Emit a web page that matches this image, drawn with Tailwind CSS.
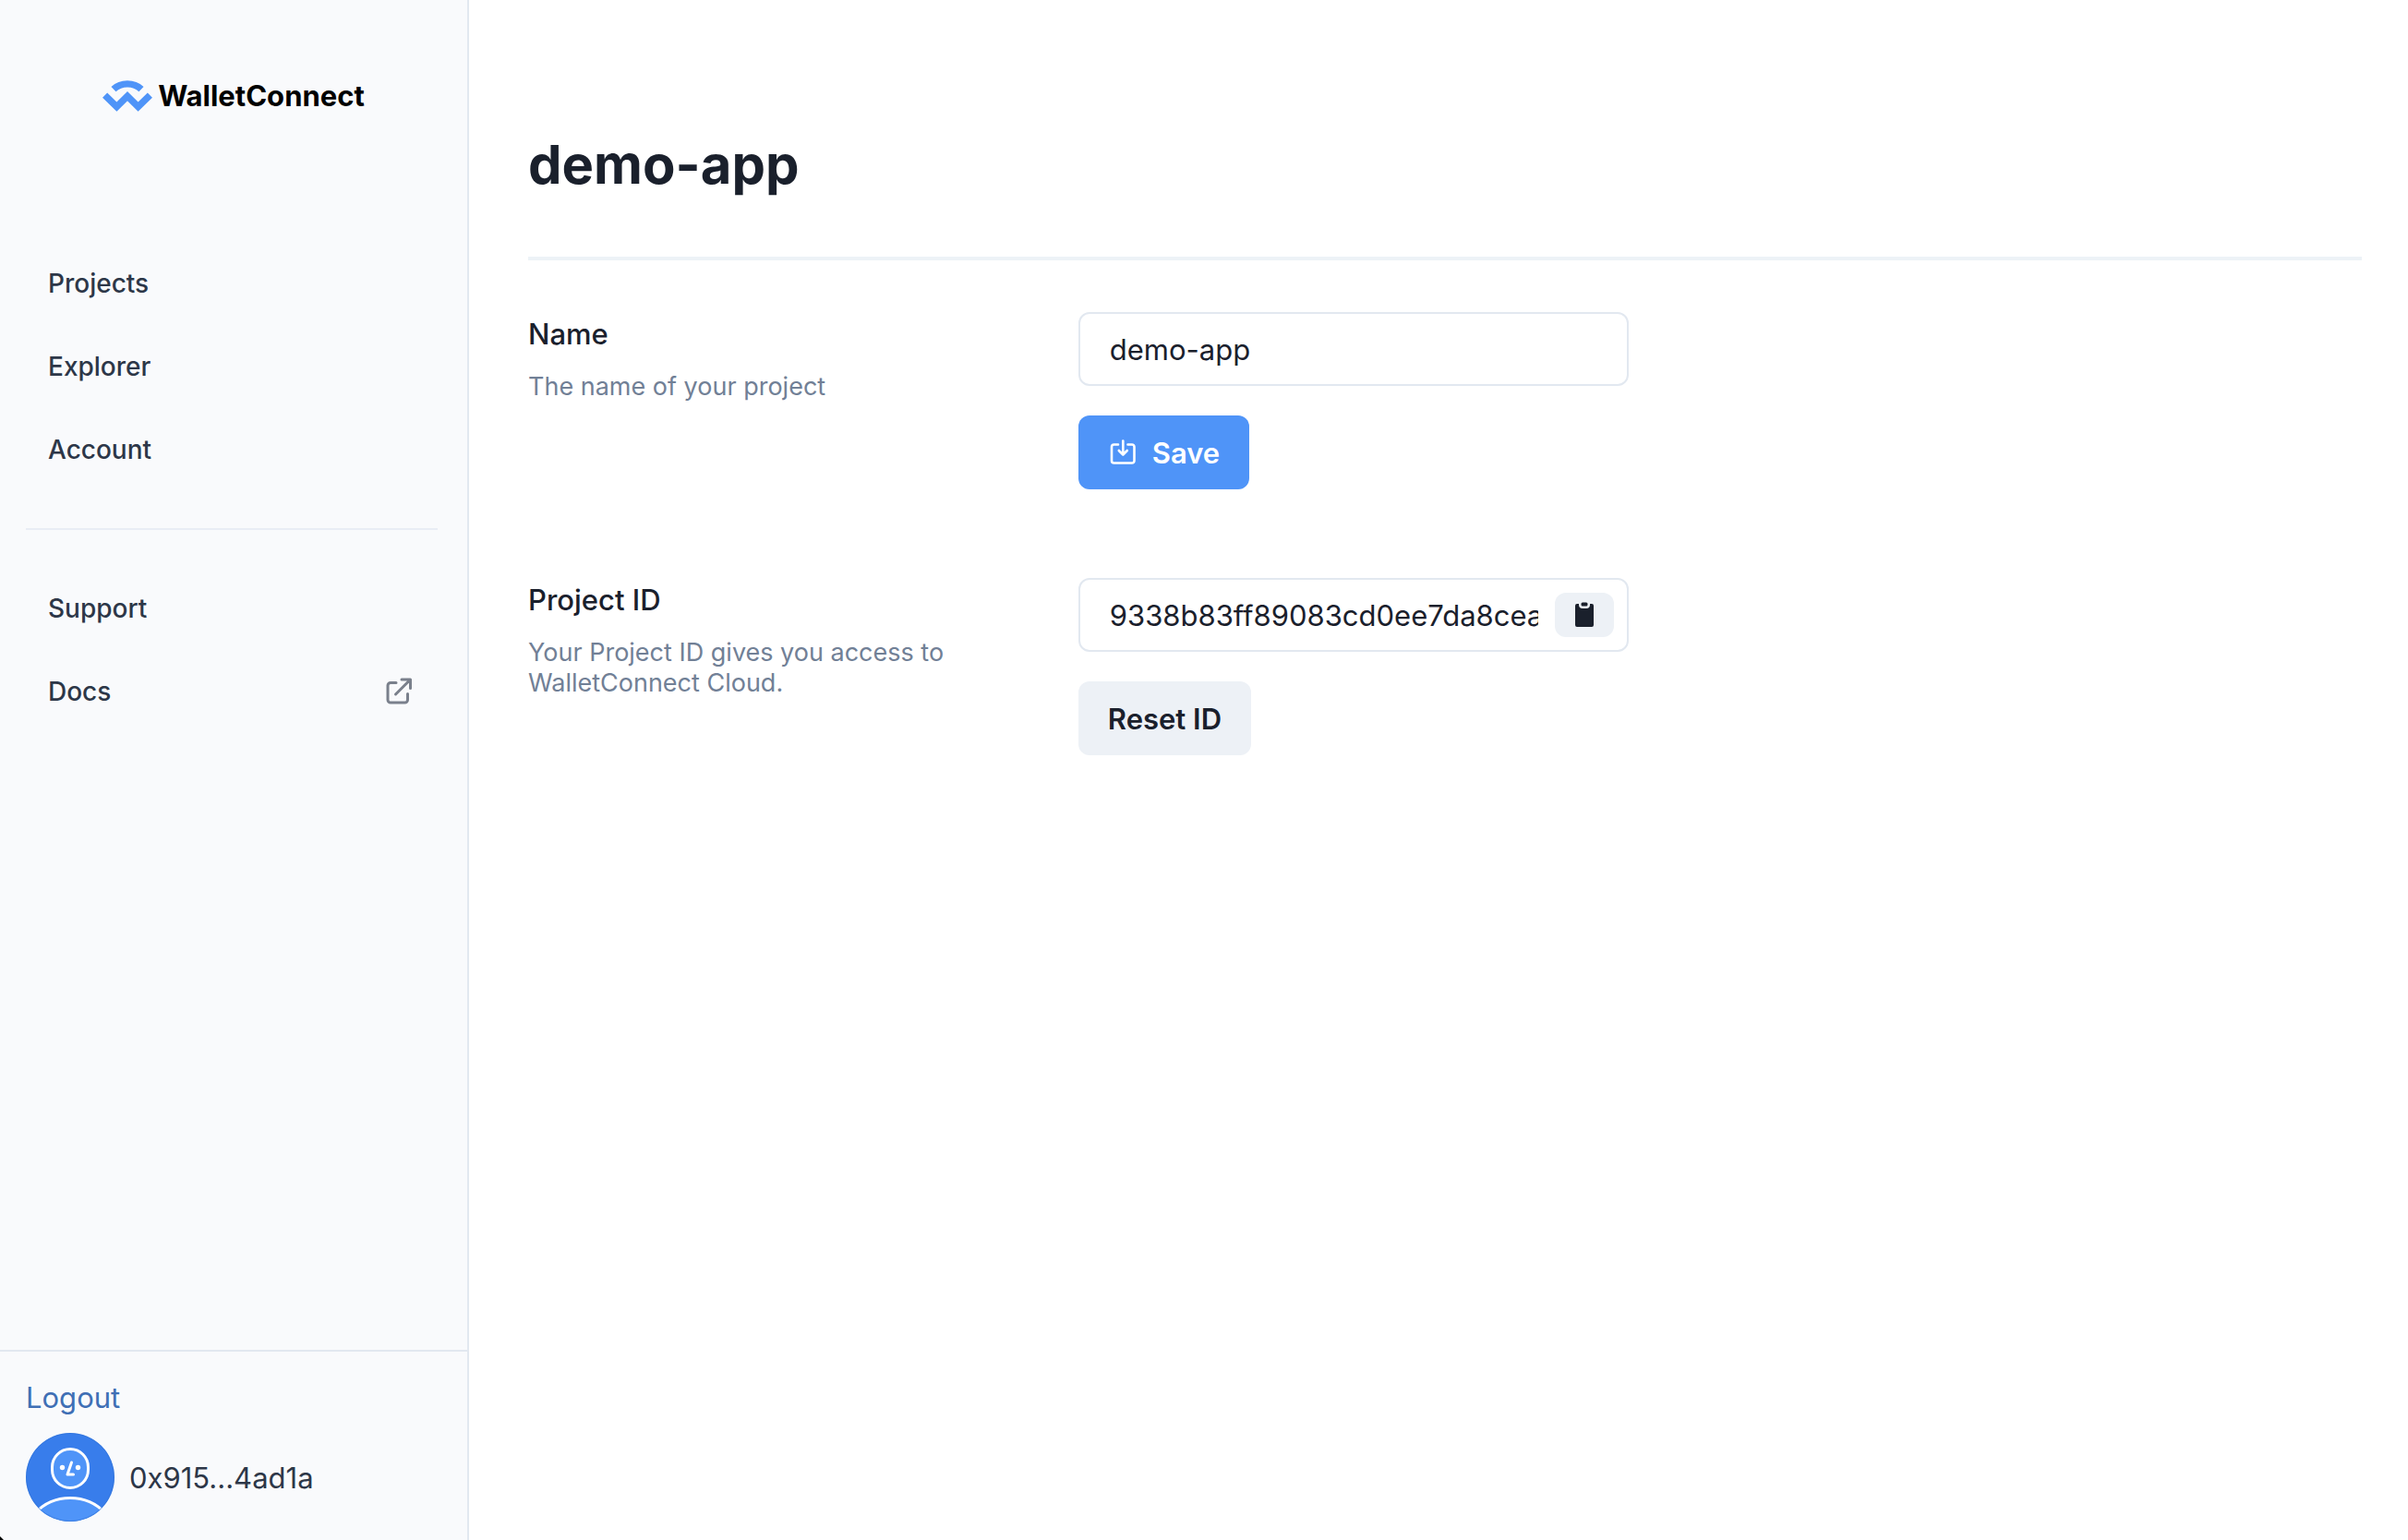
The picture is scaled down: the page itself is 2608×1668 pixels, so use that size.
<!DOCTYPE html>
<html lang="en">
<head>
<meta charset="utf-8">
<title>demo-app – WalletConnect Cloud</title>
<script src="https://cdn.jsdelivr.net/npm/@tailwindcss/browser@4"></script>
</head>
<body class="relative flex min-h-screen bg-white font-[Inter,sans-serif] text-[31px] leading-[48px] text-[#1a202c]">
  <aside class="flex w-[508px] shrink-0 flex-col border-r-2 border-[#e2e8f0] bg-[#f9fafc] text-[#2d3748]">
    <a href="#" class="flex items-center justify-center gap-[6px] pt-20 text-black">
      <svg class="h-[34px] w-[54px]" viewBox="0 0 54 34" fill="none" stroke="#4f94f8" stroke-width="7.4" stroke-linejoin="miter" aria-hidden="true">
        <path d="M12 9.6C20 2 34 2 42 9.6"/>
        <path d="M2.6 16.2 15.4 28.6 27 17.2 38.6 28.6 51.4 16.2"/>
      </svg>
      <span class="font-bold">WalletConnect</span>
    </a>
    <nav class="mt-[134px] flex flex-col px-7 text-[28px] font-medium">
      <a href="#" class="flex h-[90px] items-center px-6">Projects</a>
      <a href="#" class="flex h-[90px] items-center px-6">Explorer</a>
      <a href="#" class="flex h-[90px] items-center px-6">Account</a>
      <hr class="mt-10 mb-10 mr-1 border-t-2 border-[#e9edf5]">
      <a href="#" class="flex h-[90px] items-center px-6">Support</a>
      <a href="#" class="flex h-[90px] items-center justify-between px-6">Docs
        <svg class="mr-[6px] size-8" viewBox="0 0 32 32" fill="none" stroke="#7a808c" stroke-width="3" stroke-linecap="round" stroke-linejoin="round" aria-hidden="true">
          <path d="M13 6.500H7a3 3 0 0 0-3 3V25a3 3 0 0 0 3 3h15.500a3 3 0 0 0 3-3v-6.500M12.500 19 28 3.500M19 3h9.500v9.500"/>
        </svg>
      </a>
    </nav>
    <div class="mt-auto flex flex-col gap-[14px] border-t-2 border-[#e2e8f0] px-7 pt-[26px] pb-5">
      <a href="#" class="self-start text-[#3f6fb5]">Logout</a>
      <div class="flex items-center gap-4">
        <svg class="size-24" viewBox="0 0 96 96" aria-hidden="true">
          <defs><clipPath id="disc"><circle cx="48" cy="48" r="48"/></clipPath></defs>
          <g clip-path="url(#disc)">
            <rect width="96" height="96" fill="#387deb"/>
            <path d="M10 87C30 65 66 65 86 87V104H10Z" fill="#4f94f8" stroke="#fff" stroke-width="3"/>
          </g>
          <circle cx="48" cy="48" r="47.500" fill="none" stroke="#2f6fd0" stroke-opacity=".5"/>
          <rect x="28.500" y="17.500" width="39" height="42" rx="19.500" fill="#4f94f8" stroke="#fff" stroke-width="3"/>
          <circle cx="39.500" cy="37.500" r="2.700" fill="#fff"/><circle cx="56.500" cy="37.500" r="2.700" fill="#fff"/>
          <path d="M49.500 32 45 45h6.500" fill="none" stroke="#fff" stroke-width="3" stroke-linecap="round" stroke-linejoin="round"/>
        </svg>
        <span class="pt-[2px]">0x915...4ad1a</span>
      </div>
    </div>
  </aside>

  <main class="min-w-0 flex-1 pr-[50px] pl-16">
    <h1 class="pt-[142px] text-[58px] leading-[72px] font-bold">demo-app</h1>
    <hr class="mt-16 border-t-4 border-[#edf2f7]">
    <section class="mt-14 flex">
      <div class="w-[30%] pr-16">
        <label for="name" class="block font-medium">Name</label>
        <p class="mt-4 text-[27px] leading-[33px] text-[#718096]">The name of your project</p>
      </div>
      <div class="w-[30%]">
        <input id="name" type="text" value="demo-app" class="block h-20 w-full rounded-xl border-2 border-[#e2e8f0] px-8 outline-none">
        <button type="button" class="mt-8 flex h-20 items-center gap-4 rounded-xl bg-[#4f94f8] px-8 font-semibold text-white">
          <svg class="size-8" viewBox="0 0 32 32" fill="none" stroke="#fff" stroke-width="2.600" stroke-linecap="round" stroke-linejoin="round" aria-hidden="true">
            <path d="M11 7.500H6.500a2.500 2.500 0 0 0-2.500 2.500v15a2.500 2.500 0 0 0 2.500 2.500h19.500a2.500 2.500 0 0 0 2.500-2.500V10a2.500 2.500 0 0 0-2.500-2.500h-4.500M16.300 3.500v15M11.800 14 16.300 18.500l4.500-4.500"/>
          </svg>
          <span class="pt-[2px]">Save</span>
        </button>
      </div>
    </section>
    <section class="mt-24 flex">
      <div class="w-[30%] pr-16">
        <label for="pid" class="block font-medium">Project ID</label>
        <p class="mt-4 text-[27px] leading-[33px] text-[#718096]">Your Project ID gives you access to WalletConnect Cloud.</p>
      </div>
      <div class="w-[30%]">
        <div class="flex h-20 items-center rounded-xl border-2 border-[#e2e8f0] pr-[14px] pl-8">
          <input id="pid" type="text" readonly value="9338b83ff89083cd0ee7da8cea" class="mr-[18px] min-w-0 flex-1 pt-[2px] outline-none">
          <button type="button" aria-label="Copy project ID" class="flex h-12 w-16 shrink-0 items-center justify-center rounded-xl bg-[#edf1f6]">
            <svg class="size-8" viewBox="0 0 32 32" fill="#1a202c" aria-hidden="true">
              <path d="M8 4h2v1a4 4 0 0 0 4 4h4a4 4 0 0 0 4-4V4h2a2 2 0 0 1 2 2v21a2 2 0 0 1-2 2H8a2 2 0 0 1-2-2V6a2 2 0 0 1 2-2Z"/>
              <rect x="12.500" y="2.500" width="7" height="4" rx="1.500"/>
            </svg>
          </button>
        </div>
        <button type="button" class="mt-8 h-20 rounded-xl bg-[#edf1f6] px-8 pt-[2px] font-semibold">Reset ID</button>
      </div>
    </section>
  </main>

  <!-- window corner -->
  <svg class="absolute bottom-0 left-0 size-1" viewBox="0 0 4 4" aria-hidden="true"><path d="M0 0 4 4H0Z"/></svg>
</body>
</html>
